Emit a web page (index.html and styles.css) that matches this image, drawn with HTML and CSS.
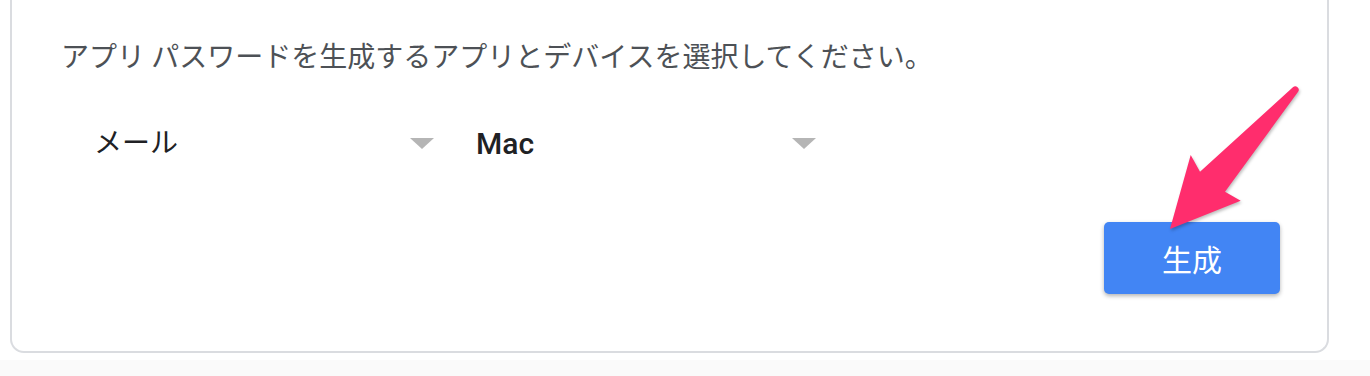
FILE: index.html
```html
<!DOCTYPE html>
<html lang="ja">
<head>
<meta charset="utf-8">
<title>アプリ パスワード</title>
<link rel="stylesheet" href="styles.css">
</head>
<body>
<div class="page">
  <section class="card">
    <p class="intro">アプリ パスワードを生成するアプリとデバイスを選択してください。</p>
    <div class="selects">
      <div class="select">
        <span class="select-value">メール</span>
        <span class="caret"></span>
      </div>
      <div class="select">
        <span class="select-value select-value--bold">Mac</span>
        <span class="caret"></span>
      </div>
    </div>
    <div class="actions">
      <button class="btn-primary" type="button">生成</button>
    </div>
  </section>
</div>
<svg class="annotation" width="1370" height="376" viewBox="0 0 1370 376" aria-hidden="true">
  <path d="M1292.9,87.2 L1200,171.7 L1190.7,155 L1170,229 L1240.7,200.7 L1225,191.7 L1298.1,91.8 A3.5,3.5 0 0 0 1292.9,87.2 Z" fill="#ff2d6d"/>
</svg>
</body>
</html>
```

FILE: styles.css
```css
html, body {
  margin: 0;
  padding: 0;
}

body {
  width: 1370px;
  height: 376px;
  overflow: hidden;
  background: #fafafa;
  font-family: "Noto Sans CJK JP", "Noto Sans", sans-serif;
  position: relative;
}

.page {
  background: #ffffff;
  padding: 0 41px 7px 10px;
}

.card {
  border: 2px solid #dadce0;
  border-top: none;
  border-radius: 0 0 14px 14px;
  padding: 35px 47px 57px 49px;
  background: #ffffff;
}

.intro {
  margin: 0;
  font-size: 28px;
  line-height: 40px;
  color: #4d5156;
  white-space: nowrap;
}

.selects {
  display: flex;
  margin-top: 46px;
  height: 40px;
}

.select {
  width: 382px;
  box-sizing: border-box;
  padding: 0 9px 0 33px;
  display: flex;
  align-items: center;
  justify-content: space-between;
}

.select-value {
  font-size: 28px;
  line-height: 40px;
  color: #202124;
}

.select-value--bold {
  font-family: Roboto, "Noto Sans CJK JP", sans-serif;
  font-weight: 500;
  font-size: 30px;
  margin-top: 5px;
}

.caret {
  width: 0;
  height: 0;
  border-left: 12px solid transparent;
  border-right: 12px solid transparent;
  border-top: 11px solid #b5b5b5;
  margin-top: 4px;
}

.actions {
  display: flex;
  justify-content: flex-end;
  margin-top: 61px;
}

.btn-primary {
  width: 176px;
  height: 72px;
  border: none;
  border-radius: 5px;
  background: #4285f4;
  color: #ffffff;
  font-family: "Noto Sans CJK JP", sans-serif;
  font-size: 30px;
  line-height: 1;
  box-shadow: 0 2px 4px rgba(0, 0, 0, 0.3);
  padding: 0;
}

.annotation {
  position: absolute;
  top: 0;
  left: 0;
  pointer-events: none;
  filter: drop-shadow(1px 2px 1.5px rgba(0, 0, 0, 0.25));
}
```
